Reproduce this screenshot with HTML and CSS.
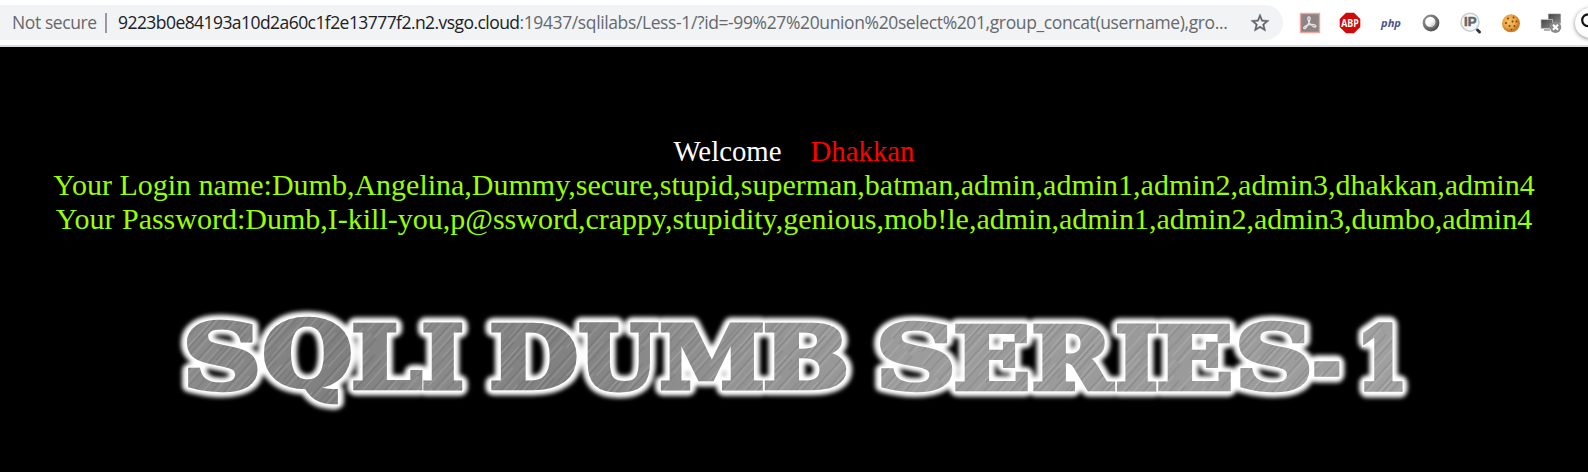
FILE: index.html
```html
<!DOCTYPE html>
<html lang="en">
<head>
<meta charset="utf-8">
<title>Less-1</title>
<link rel="stylesheet" href="styles.css">
</head>
<body>
<header class="toolbar">
  <div class="omnibox">
    <span class="security">Not secure</span>
    <span class="divider"></span>
    <span class="url"><span class="host">9223b0e84193a10d2a60c1f2e13777f2.n2.vsgo.cloud</span><span class="path">:19437/sqlilabs/Less-1/?id=-99%27%20union%20select%201,group_concat(username),gro...</span></span>
    <svg class="star" viewBox="0 0 24 24"><path d="M22 9.24l-7.19-.62L12 2 9.19 8.63 2 9.24l5.46 4.73L5.82 21 12 17.27 18.18 21l-1.63-7.03L22 9.24zM12 15.4l-3.76 2.27 1-4.28-3.32-2.88 4.38-.38L12 6.1l1.71 4.04 4.38.38-3.32 2.88 1 4.28L12 15.4z"/></svg>
  </div>
  <div class="extensions">
    <svg class="ext" viewBox="0 0 22 22"><rect x="1.5" y="1.5" width="19" height="19" fill="#8d8584" stroke="#f3a39a" stroke-width="1.4"/><path d="M5 16.500c-1.200-1.500 2-3.400 6-3.900s6.600.4 5.800 1.900-4.300-.4-6.300-3.500-2.200-5.800-.6-6 1.500 3-.3 6.300-3.400 6.200-4.600 5.200z" fill="none" stroke="#e9e6e6" stroke-width="1.300"/></svg>
    <svg class="ext" viewBox="0 0 22 22"><path d="M7 .7h8L21.300 7v8L15 21.300H7L.7 15V7z" fill="#d00a0a"/><text x="11" y="14.800" text-anchor="middle" textLength="17.500" lengthAdjust="spacingAndGlyphs" class="abp">ABP</text></svg>
    <svg class="ext" viewBox="0 0 22 22"><text x="11" y="14.500" text-anchor="middle" textLength="20" lengthAdjust="spacingAndGlyphs" class="php">php</text></svg>
    <svg class="ext" viewBox="0 0 22 22">
      <defs><linearGradient id="ring" x2="1" y2="1"><stop stop-color="#999"/><stop offset="1" stop-color="#444"/></linearGradient><linearGradient id="ball" x2="1" y2="1"><stop offset=".5" stop-color="#fff"/><stop offset="1" stop-color="#bbb"/></linearGradient></defs>
      <circle cx="11" cy="11" r="8.400" fill="url(#ring)"/><circle cx="11" cy="10.800" r="5.700" fill="#777"/><circle cx="10.300" cy="9.900" r="5.200" fill="url(#ball)"/></svg>
    <svg class="ext" viewBox="0 0 22 22"><circle cx="10" cy="10.200" r="9" fill="#f5f8fa" stroke="#c3cdd4" stroke-width="1.500"/><path d="M17.500 18l2 2" stroke="#333" stroke-width="3" stroke-linecap="round"/><text x="10.300" y="14.200" text-anchor="middle" textLength="12.500" lengthAdjust="spacingAndGlyphs" class="ip">IP</text></svg>
    <svg class="ext" viewBox="0 0 22 22">
      <defs><radialGradient id="cookie" cx=".42" cy=".4"><stop stop-color="#f8c267"/><stop offset=".7" stop-color="#eba544"/><stop offset="1" stop-color="#cf7c28"/></radialGradient></defs>
      <circle cx="11" cy="11.300" r="9" fill="url(#cookie)"/><g fill="#74400f"><circle cx="8" cy="6.500" r="1"/><circle cx="13.500" cy="5.500" r=".9"/><circle cx="12.500" cy="9.500" r="1"/><circle cx="6" cy="11" r="1"/><circle cx="16.500" cy="9.500" r="1"/><circle cx="9.500" cy="14" r="1"/><circle cx="14.500" cy="14" r="1"/><circle cx="11.500" cy="17.500" r=".8"/></g></svg>
    <svg class="ext" viewBox="0 0 22 22">
      <defs><linearGradient id="screen" x2="1" y2="1"><stop stop-color="#444"/><stop offset="1" stop-color="#888"/></linearGradient></defs>
      <rect x="8.500" y="2" width="12" height="9" fill="url(#screen)" stroke="#888" stroke-width=".6"/><rect x="1" y="7.500" width="11.500" height="9" fill="url(#screen)" stroke="#ccc" stroke-width=".7"/><path d="M4 18h6M14 12h4" stroke="#999" stroke-width="1.500"/><circle cx="15.500" cy="15.200" r="5.700" fill="#8b8b8b"/><path d="M13 12.700l5 5m0-5l-5 5" stroke="#fff" stroke-width="2"/></svg>
  </div>
  <div class="profile"><svg class="search" viewBox="0 0 24 24"><circle cx="10" cy="9" r="6.500" fill="none" stroke="#111" stroke-width="2.400"/><path d="M15 14l6 6" stroke="#111" stroke-width="2.400"/></svg></div>
</header>
<main class="page">
  <div class="welcome"><span>Welcome</span><span class="name">Dhakkan</span></div>
  <div class="login">Your Login name:Dumb,Angelina,Dummy,secure,stupid,superman,batman,admin,admin1,admin2,admin3,dhakkan,admin4</div>
  <div class="password">Your Password:Dumb,I-kill-you,p@ssword,crappy,stupidity,genious,mob!le,admin,admin1,admin2,admin3,dumbo,admin4</div>
  <svg class="banner" viewBox="170 295 1250 130" role="img" aria-label="SQLI DUMB SERIES-1">
    <defs>
      <filter id="glow" x="-5%" y="-20%" width="110%" height="140%"><feGaussianBlur stdDeviation="2"/></filter>
      <filter id="brushed" filterUnits="userSpaceOnUse" x="170" y="295" width="1250" height="130" color-interpolation-filters="sRGB">
        <feGaussianBlur stdDeviation=".5"/>
      </filter>
      <linearGradient id="steel" gradientUnits="userSpaceOnUse" x1="180" y1="0" x2="1410" y2="0">
        <stop stop-color="#8b8b8b"/><stop offset=".13" stop-color="#7f7f7f"/><stop offset=".2" stop-color="#8b8b8b"/><stop offset=".3" stop-color="#808080"/><stop offset=".45" stop-color="#939393"/><stop offset=".6" stop-color="#9c9c9c"/><stop offset=".8" stop-color="#9a9a9a"/><stop offset="1" stop-color="#a0a0a0"/>
      </linearGradient>
      <pattern id="streaks" patternUnits="userSpaceOnUse" width="173" height="41" patternTransform="rotate(-48)">
        <path d="M0 2.500h90M60 7h113M0 12h70M100 16.500h60M20 21h130M0 27h60M90 30h83M30 35h90M120 38.500h53" stroke="#fff" stroke-opacity=".17" stroke-width="1"/>
        <path d="M30 4.500h120M0 9h90M80 14h93M10 18.500h120M90 24h70M0 29h100M50 32.500h110M0 37h90" stroke="#000" stroke-opacity=".12" stroke-width="1.200"/>
      </pattern>
      <mask id="metal" maskUnits="userSpaceOnUse" x="170" y="295" width="1250" height="130"><use href="#letters" class="face"/></mask>
    </defs>
    <g class="halo" filter="url(#glow)">
      <g id="letters">
        <text data-box="187 318 257.500 392">S</text><text data-box="263 317 351 405">Q</text><text data-box="353 321 422.500 390">L</text><text data-box="423 321 463 390">I</text>
        <text data-box="491 321 577 390">D</text><text data-box="579 321 658.500 392">U</text><text data-box="660 321 763 390">M</text><text data-box="764.500 321 847 390">B</text>
        <text data-box="880 319 952 392">S</text><text data-box="955 322 1028 391">E</text><text data-box="1033 322 1115.500 391">R</text><text data-box="1116.500 322 1157 391">I</text><text data-box="1158 322 1231 391">E</text><text data-box="1239 319 1309 392">S</text><text data-box="1314 361.500 1340 377">-</text><text data-box="1362.500 322 1403 391">1</text>
      </g>
    </g>
    <use href="#letters" class="edge"/>
    <g mask="url(#metal)"><g filter="url(#brushed)"><rect x="170" y="295" width="1250" height="130" fill="url(#steel)"/><rect x="170" y="295" width="1250" height="130" fill="url(#streaks)"/></g></g>
  </svg>
</main>
<script src="banner.js"></script>
</body>
</html>
```
FILE: styles.css
```css
body {
  margin: 0;
  height: 472px;
  overflow: hidden;
  background: #000;
}
.toolbar {
  box-sizing: border-box;
  display: flex;
  align-items: center;
  height: 47px;
  background: #fff;
  border-bottom: 2px solid #dadce0;
  overflow: hidden;
}
.omnibox {
  box-sizing: border-box;
  flex: none;
  display: flex;
  align-items: center;
  width: 1283px;
  height: 35px;
  padding: 0 12px 0 12px;
  background: #f1f3f4;
  border-radius: 0 18px 18px 0;
  font: 17.5px/35px "Open Sans", "Noto Sans", sans-serif;
  color: #66696d;
  white-space: nowrap;
}
.security { width: 93px; letter-spacing: -0.4px; }
.divider { width: 2px; height: 20px; background: #999b9e; margin-right: 11px; }
.url { flex: 1; }
.host { color: #202124; letter-spacing: -0.56px; }
.path { letter-spacing: -0.38px; }
.star { width: 22px; height: 22px; fill: #5f6368; stroke: #5f6368; stroke-width: .4; }
.extensions { flex: none; display: flex; gap: 18.1px; margin-left: 16.4px; }
.ext { width: 22px; height: 22px; display: block; overflow: visible; }
.abp { font: bold 10px "Open Sans", sans-serif; fill: #fff; }
.php { font: italic bold 11px "Open Sans", sans-serif; fill: #4b568c; }
.ip { font: bold 12px "Liberation Sans", sans-serif; fill: #666; stroke: #666; stroke-width: .5; }
.profile {
  flex: none;
  display: flex;
  align-items: center;
  width: 40px;
  height: 30px;
  margin-left: 13px;
  border-radius: 15px;
  background: #fff;
  box-shadow: 0 1px 4px rgba(0, 0, 0, .45);
}
.search { width: 22px; height: 22px; margin-left: 4px; }
.page {
  padding-top: 87px;
  text-align: center;
  font: 30px/34px "Liberation Serif", serif;
  color: #99ff00;
  white-space: nowrap;
}
.welcome { display: flex; justify-content: center; gap: 29px; color: #fff; font-size: 28.8px; }
.name { color: #f00; }
.banner { display: block; width: 1250px; height: 130px; margin: 59px 0 0 170px; }
.banner text {
  font: bold 95px "DejaVu Serif", serif;
  vector-effect: non-scaling-stroke;
}
.halo { fill: #fff; stroke: #fff; stroke-width: 16px; stroke-linejoin: round; }
.edge { fill: #fff; stroke: #fff; stroke-width: 7px; }
.face { fill: #fff; stroke: #fff; stroke-width: 5px; stroke-linejoin: miter; }
```
FILE: banner.js
```js
// Stretch each banner letter so that its ink, plus the stroke round it, fills its box.
const ctx = document.createElement('canvas').getContext('2d');
ctx.font = 'bold 95px "DejaVu Serif"';
const inset = 2.5;
document.querySelectorAll('#letters text').forEach((el) => {
  const [l, t, r, b] = el.dataset.box.split(' ').map(Number);
  const m = ctx.measureText(el.textContent);
  const sx = (r - l - 2 * inset) / (m.actualBoundingBoxRight + m.actualBoundingBoxLeft);
  const sy = (b - t - 2 * inset) / (m.actualBoundingBoxAscent + m.actualBoundingBoxDescent);
  const x = l + inset + m.actualBoundingBoxLeft * sx;
  const y = t + inset + m.actualBoundingBoxAscent * sy;
  el.setAttribute('transform', `translate(${x} ${y}) scale(${sx} ${sy})`);
});
```
